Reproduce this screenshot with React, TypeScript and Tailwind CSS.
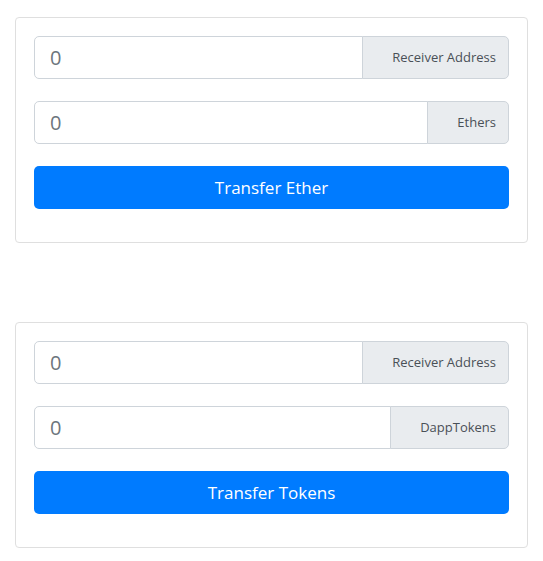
const font = { fontFamily: '"Segoe UI", "Open Sans", "Noto Sans", sans-serif' };

function Field({ label }: { label: string }) {
  return (
    <div className="mb-[22px] flex h-[43px] w-full">
      <input
        className="min-w-0 flex-1 rounded-l-[5px] border border-[#ced4da] bg-white px-[15px] text-[20px] text-[#6c757d] outline-none"
        defaultValue="0"
      />
      <div className="-ml-px flex items-center rounded-r-[5px] border border-[#ced4da] bg-[#e9ecef] pr-[12px] pl-[29px] text-[13px] text-[#495057]">
        {label}
      </div>
    </div>
  );
}

function TransferCard({ label, button }: { label: string; button: string }) {
  return (
    <div className="rounded-[4px] border border-[#dfdfdf] bg-white px-[18px] pt-[18px] pb-[33px]">
      <Field label="Receiver Address" />
      <Field label={label} />
      <button className="flex h-[43px] w-full items-center justify-center rounded-[5px] bg-[#007bff] text-[17px] text-white">
        {button}
      </button>
    </div>
  );
}

export default function App() {
  return (
    <div className="min-h-screen bg-white px-[15px] pt-[17px]" style={font}>
      <div className="flex flex-col gap-[79px]">
        <TransferCard label="Ethers" button="Transfer Ether" />
        <TransferCard label="DappTokens" button="Transfer Tokens" />
      </div>
    </div>
  );
}
